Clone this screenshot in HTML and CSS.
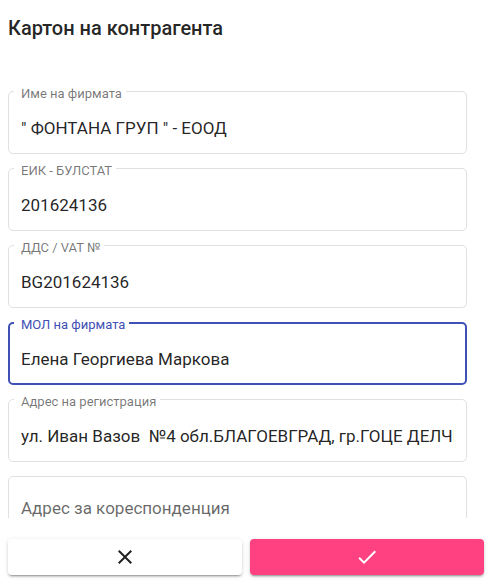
FILE: index.html
```html
<!DOCTYPE html>
<html lang="bg">
<head>
  <meta charset="utf-8">
  <meta name="viewport" content="width=device-width, initial-scale=1">
  <title>Картон на контрагента</title>
  <link rel="stylesheet" href="styles.css">
</head>
<body>
  <form class="dialog">
    <h1 class="dialog-title">Картон на контрагента</h1>
    <div class="dialog-content">
      <div class="field">
        <label class="field-label" for="name">Име на фирмата</label>
        <input class="field-input" id="name" type="text" value="&quot; ФОНТАНА ГРУП &quot; - ЕООД">
      </div>
      <div class="field">
        <label class="field-label" for="eik">ЕИК - БУЛСТАТ</label>
        <input class="field-input" id="eik" type="text" value="201624136">
      </div>
      <div class="field">
        <label class="field-label" for="vat">ДДС / VAT №</label>
        <input class="field-input" id="vat" type="text" value="BG201624136">
      </div>
      <div class="field field-active">
        <label class="field-label" for="mol">МОЛ на фирмата</label>
        <input class="field-input" id="mol" type="text" value="Елена Георгиева Маркова">
      </div>
      <div class="field">
        <label class="field-label" for="address">Адрес на регистрация</label>
        <input class="field-input" id="address" type="text" value="ул. Иван Вазов  №4 обл.БЛАГОЕВГРАД, гр.ГОЦЕ ДЕЛЧЕВ">
      </div>
      <div class="field field-empty">
        <input class="field-input" id="mail" type="text" aria-label="Адрес за кореспонденция" placeholder="Адрес за кореспонденция">
      </div>
    </div>
    <div class="dialog-actions">
      <button class="button" type="button" aria-label="Отказ">
        <svg class="icon" viewBox="0 0 24 24" aria-hidden="true"><path d="M19 6.41 17.59 5 12 10.59 6.41 5 5 6.41 10.59 12 5 17.59 6.41 19 12 13.41 17.59 19 19 17.59 13.41 12z"/></svg>
      </button>
      <button class="button button-accent" type="submit" aria-label="Запис">
        <svg class="icon" viewBox="0 0 24 24" aria-hidden="true"><path d="M9 16.17 4.83 12l-1.42 1.41L9 19 21 7l-1.41-1.41z"/></svg>
      </button>
    </div>
  </form>
</body>
</html>
```

FILE: styles.css
```css
* {
  box-sizing: border-box;
}

body {
  margin: 0;
  background: #fff;
  color: rgba(0, 0, 0, 0.87);
  font-family: Roboto, "Liberation Sans", sans-serif;
}

.dialog {
  display: flex;
  flex-direction: column;
  height: 100vh;
  padding: 12px 10px 9px 8px;
}

.dialog-title {
  margin: 0 0 32px;
  font-size: 20px;
  font-weight: 500;
  line-height: 32px;
}

.dialog-content {
  display: flex;
  flex: 1;
  flex-direction: column;
  gap: 14px;
  min-height: 0;
  padding: 15px 17px 0 0;
  overflow: hidden;
}

.field {
  position: relative;
  flex: none;
  padding: 25px 12px 15px;
  border: 1px solid #e0e0e0;
  border-radius: 5px;
}

.field-label {
  position: absolute;
  top: -6px;
  left: 5px;
  padding: 0 4px 0 7px;
  background: #fff;
  color: rgba(0, 0, 0, 0.54);
  font-size: 13px;
  line-height: 16px;
}

.field-input {
  display: block;
  width: 100%;
  height: 21px;
  padding: 0;
  border: 0;
  outline: 0;
  background: transparent;
  color: inherit;
  font-family: inherit;
  font-size: 17px;
}

.field-input::placeholder {
  color: rgba(0, 0, 0, 0.6);
}

.field-active {
  padding: 24px 11px 14px;
  border: 2px solid #3f51b5;
}

.field-active .field-label {
  top: -7px;
  left: 4px;
  color: #3f51b5;
}

.field-empty {
  padding: 20px 12px;
}

.dialog-actions {
  display: flex;
  gap: 8px;
  padding-top: 21px;
}

.button {
  display: flex;
  flex: 1;
  align-items: center;
  justify-content: center;
  height: 36px;
  padding: 0;
  border: 0;
  border-radius: 4px;
  background: #fff;
  box-shadow: 0 3px 1px -2px rgba(0, 0, 0, 0.2), 0 2px 2px 0 rgba(0, 0, 0, 0.14), 0 1px 5px 0 rgba(0, 0, 0, 0.12);
  color: rgba(0, 0, 0, 0.87);
}

.button-accent {
  background: #ff4081;
  color: #fff;
}

.icon {
  width: 24px;
  height: 24px;
  fill: currentColor;
}
```
